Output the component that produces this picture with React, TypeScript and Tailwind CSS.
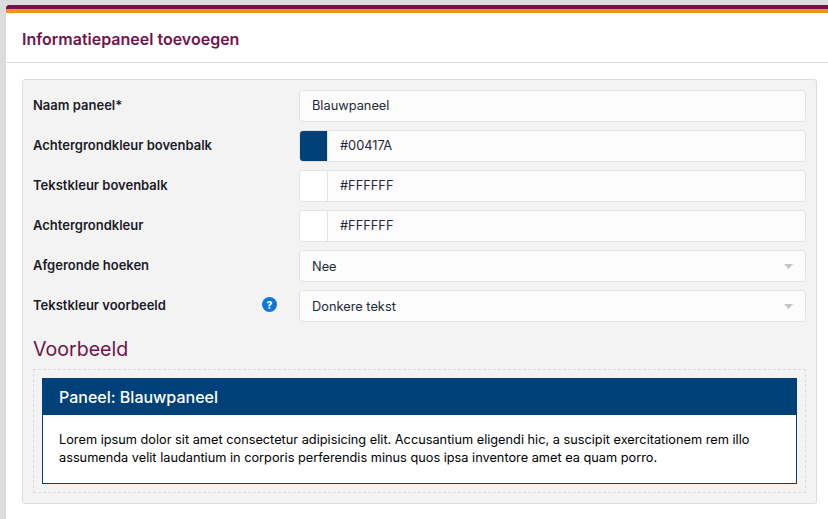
const inputCls = "flex h-8 w-[507px] items-center rounded-[4px] border border-[#e3e3e3] bg-[#fcfcfc] text-[12.8px] text-[#1f2937]";

function Label({ text, help }: { text: string; help?: boolean }) {
  return (
    <div className="flex w-[266px] shrink-0 items-center justify-between pr-[22px] text-[13px] font-semibold text-[#1c1c28]">
      <span>{text}</span>
      {help && (
        <span className="mb-[3px] flex h-[15px] w-[15px] items-center justify-center rounded-full bg-[#0b78d8] text-[10px] font-extrabold leading-none text-white">?</span>
      )}
    </div>
  );
}

function TextRow({ label, value }: { label: string; value: string }) {
  return (
    <div className="flex h-8 items-center">
      <Label text={label} />
      <div className={inputCls + " pl-3"}>{value}</div>
    </div>
  );
}

function ColorRow({ label, value, color }: { label: string; value: string; color: string }) {
  return (
    <div className="flex h-8 items-center">
      <Label text={label} />
      <div className={inputCls + " overflow-hidden"}>
        <span className={"h-full w-[28px] shrink-0 border-r border-[#e3e3e3] " + color} />
        <span className="pl-3">{value}</span>
      </div>
    </div>
  );
}

function SelectRow({ label, value, help }: { label: string; value: string; help?: boolean }) {
  return (
    <div className="flex h-8 items-center">
      <Label text={label} help={help} />
      <div className={inputCls + " justify-between pl-3 pr-[12px]"}>
        <span className="pt-[2px]">{value}</span>
        <svg width="9" height="5" viewBox="0 0 9 5"><path d="M0 0h9L4.5 5z" fill="#c4c4bc" /></svg>
      </div>
    </div>
  );
}

export default function App() {
  return (
    <div className="h-[519px] w-[828px] overflow-hidden bg-[#dcdcdc] pl-[6px] pt-[5px] font-['Inter',sans-serif]">
      <div className="h-full bg-white">
        <div className="h-1 rounded-tl-[3px] bg-[#72134a]" />
        <div className="h-1 bg-[#fb9312]" />
        <div className="flex h-[50px] items-center border-b border-[#dcdcdc] pl-4 pt-[2px] text-base font-semibold text-[#72134a]">
          Informatiepaneel toevoegen
        </div>
        <div className="ml-4 mr-[11px] mt-4 h-[425px] rounded-[3px] border border-[#dcdcdc] bg-[#f3f3f3] pl-[10px] pr-[10px] pt-[10px]">
          <div className="flex flex-col gap-2">
            <TextRow label="Naam paneel*" value="Blauwpaneel" />
            <ColorRow label="Achtergrondkleur bovenbalk" value="#00417A" color="bg-[#00417a]" />
            <ColorRow label="Tekstkleur bovenbalk" value="#FFFFFF" color="bg-white" />
            <ColorRow label="Achtergrondkleur" value="#FFFFFF" color="bg-white" />
            <SelectRow label="Afgeronde hoeken" value="Nee" />
            <SelectRow label="Tekstkleur voorbeeld" value="Donkere tekst" help />
          </div>
          <h2 className="mt-[15px] text-[19.6px] font-normal leading-6 text-[#72134a]">Voorbeeld</h2>
          <div className="mt-[8px] h-[124px] border border-dashed border-[#dcdcdc] px-2 pt-2">
            <div className="h-[106px] border border-[#00417a] bg-white">
              <div className="flex h-9 items-center bg-[#00417a] pl-4 text-base font-medium text-white">Paneel: Blauwpaneel</div>
              <p className="px-4 pt-4 text-[12.75px] leading-[18px] text-black">
                Lorem ipsum dolor sit amet consectetur adipisicing elit. Accusantium eligendi hic, a suscipit exercitationem rem illo assumenda velit laudantium in corporis perferendis minus quos ipsa inventore amet ea quam porro.
              </p>
            </div>
          </div>
        </div>
      </div>
    </div>
  );
}
